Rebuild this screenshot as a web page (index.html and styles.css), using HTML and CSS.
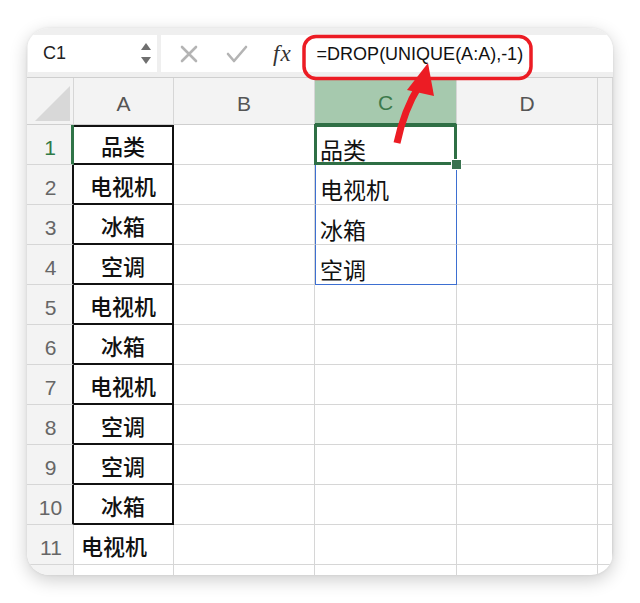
FILE: index.html
```html
<!DOCTYPE html>
<html lang="zh">
<head>
<meta charset="utf-8">
<title>DROP UNIQUE</title>
<link rel="stylesheet" href="styles.css">
</head>
<body>
<div class="page">
  <div class="card">
    <div class="fbar">
      <div class="namebox">
        <span class="ref">C1</span>
        <span class="spin">
          <svg width="12" height="24" viewBox="0 0 12 24"><path d="M6 1 L11 8 L1 8 Z" fill="#6f6f6f"/><path d="M1 15 L11 15 L6 22 Z" fill="#6f6f6f"/></svg>
        </span>
      </div>
      <div class="formula">
        <svg class="ico" width="22" height="22" viewBox="0 0 22 22"><path d="M4 4 L18 18 M18 4 L4 18" stroke="#b4b4b4" stroke-width="2.6" stroke-linecap="round"/></svg>
        <svg class="ico ok" width="24" height="22" viewBox="0 0 24 22"><path d="M3 11 L9 18 L21 4" fill="none" stroke="#b4b4b4" stroke-width="2.6" stroke-linecap="round" stroke-linejoin="round"/></svg>
        <span class="fx">fx</span>
        <span class="ftext">=DROP(UNIQUE(A:A),-1)</span>
      </div>
    </div>
    <div class="grid">
      <div class="ch corner"><svg width="40" height="40" viewBox="0 0 40 40"><path d="M3 38 L38 3 L38 38 Z" fill="#d8d8d8"/></svg></div>
      <div class="ch">A</div>
      <div class="ch">B</div>
      <div class="ch sel">C</div>
      <div class="ch">D</div>
      <div class="ch"></div>

      <div class="rh rsel">1</div>
      <div class="c a top">品类</div>
      <div class="c"></div>
      <div class="c v active">品类</div>
      <div class="c"></div>
      <div class="c"></div>

      <div class="rh rb">2</div>
      <div class="c a">电视机</div>
      <div class="c"></div>
      <div class="c v spill">电视机</div>
      <div class="c"></div>
      <div class="c"></div>

      <div class="rh rb">3</div>
      <div class="c a">冰箱</div>
      <div class="c"></div>
      <div class="c v spill">冰箱</div>
      <div class="c"></div>
      <div class="c"></div>

      <div class="rh rb">4</div>
      <div class="c a">空调</div>
      <div class="c"></div>
      <div class="c v spill last">空调</div>
      <div class="c"></div>
      <div class="c"></div>

      <div class="rh rb">5</div>
      <div class="c a">电视机</div>
      <div class="c"></div><div class="c"></div><div class="c"></div><div class="c"></div>

      <div class="rh rb">6</div>
      <div class="c a">冰箱</div>
      <div class="c"></div><div class="c"></div><div class="c"></div><div class="c"></div>

      <div class="rh rb">7</div>
      <div class="c a">电视机</div>
      <div class="c"></div><div class="c"></div><div class="c"></div><div class="c"></div>

      <div class="rh rb">8</div>
      <div class="c a">空调</div>
      <div class="c"></div><div class="c"></div><div class="c"></div><div class="c"></div>

      <div class="rh rb">9</div>
      <div class="c a">空调</div>
      <div class="c"></div><div class="c"></div><div class="c"></div><div class="c"></div>

      <div class="rh rb">10</div>
      <div class="c a">冰箱</div>
      <div class="c"></div><div class="c"></div><div class="c"></div><div class="c"></div>

      <div class="rh">11</div>
      <div class="c a11">电视机</div>
      <div class="c"></div><div class="c"></div><div class="c"></div><div class="c"></div>

      <div class="rh"></div>
      <div class="c"></div><div class="c"></div><div class="c"></div><div class="c"></div><div class="c"></div>
    </div>
  </div>
  <svg class="annot" width="640" height="603" viewBox="0 0 640 603">
    <rect x="304" y="36.5" width="227" height="42" rx="12" ry="12" fill="none" stroke="#ec1c24" stroke-width="3.5"/>
    <path d="M397 143 Q404 110 419 86" fill="none" stroke="#ec1c24" stroke-width="7"/>
    <path d="M428 63 L407 90 L434 96 Z" fill="#ec1c24"/>
  </svg>
</div>
</body>
</html>
```
FILE: styles.css
```css
html, body {
  margin: 0;
  padding: 0;
  background: #ffffff;
}
.page {
  position: relative;
  width: 640px;
  height: 603px;
  padding: 28px 27px 0 27px;
  box-sizing: border-box;
  font-family: "Liberation Sans", Arial, sans-serif;
}
.card {
  width: 586px;
  height: 547px;
  border-radius: 22px;
  overflow: hidden;
  background: #ffffff;
  box-shadow: 0 5px 18px rgba(0, 0, 0, 0.2), 0 0 3px rgba(0, 0, 0, 0.08);
  display: flex;
  flex-direction: column;
}
.fbar {
  flex: 0 0 50px;
  height: 50px;
  box-sizing: border-box;
  background: #efefef;
  border-bottom: 1px solid #cfcfcf;
  padding: 7px 0 5px 1px;
  display: flex;
  gap: 4px;
}
.namebox {
  width: 129px;
  background: #ffffff;
  display: flex;
  align-items: center;
  justify-content: space-between;
  padding: 0 5px 0 15px;
  box-sizing: border-box;
}
.ref {
  font-size: 18px;
  color: #222;
}
.spin {
  display: flex;
  align-items: center;
}
.formula {
  flex: 1;
  background: #ffffff;
  display: flex;
  align-items: center;
  padding-left: 17px;
}
.ico {
  display: block;
}
.ok {
  margin-left: 25px;
}
.fx {
  font-family: "Liberation Serif", "Times New Roman", serif;
  font-style: italic;
  font-size: 23px;
  color: #333;
  margin-left: 24px;
  letter-spacing: 1px;
}
.ftext {
  font-size: 18px;
  color: #111;
  margin-left: 25px;
  padding-top: 2px;
}
.grid {
  flex: 0 0 auto;
  display: grid;
  grid-template-columns: 47px 100px 141px 142px 141px 1fr;
  grid-template-rows: 47px repeat(12, 40px);
}
.ch {
  background: #f3f3f3;
  border-right: 1px solid #d6d6d6;
  border-bottom: 1px solid #cfcfcf;
  display: flex;
  align-items: center;
  justify-content: center;
  padding-top: 5px;
  box-sizing: border-box;
  font-size: 21px;
  color: #555;
}
.corner {
  padding: 0;
  align-items: flex-end;
  justify-content: flex-end;
}
.corner svg {
  display: block;
  margin: 0 1px 1px 0;
}
.ch.sel {
  background: #a6c9ae;
  color: #3c7a4c;
  border-bottom: 2px solid #2f6f45;
}
.rh {
  background: #f3f3f3;
  border-right: 1px solid #d6d6d6;
  border-bottom: 1px solid #d6d6d6;
  display: flex;
  align-items: center;
  justify-content: center;
  padding-top: 6px;
  padding-left: 2px;
  box-sizing: border-box;
  font-size: 21px;
  color: #666;
}
.rh.rb {
  border-right: 2px solid #111;
}
.rh.rsel {
  color: #2f7a47;
  border-right: 3px solid #2f7447;
}
.c {
  border-right: 1px solid #d6d6d6;
  border-bottom: 1px solid #d6d6d6;
  box-sizing: border-box;
  font-family: "Noto Sans CJK SC", "Liberation Sans", sans-serif;
  color: #111;
  display: flex;
  align-items: center;
  white-space: nowrap;
}
.c.a {
  justify-content: center;
  font-size: 22px;
  font-weight: 500;
  border-right: 2px solid #111;
  border-bottom: 2px solid #111;
  padding-top: 1px;
}
.c.a.top {
  box-shadow: inset 0 2px 0 #111;
}
.c.a11 {
  font-size: 22px;
  font-weight: 500;
  padding-left: 7px;
  padding-top: 1px;
}
.c.v {
  font-size: 23px;
  padding-left: 5px;
  padding-top: 9px;
}
.c.active {
  position: relative;
  box-shadow: inset 0 0 0 3px #2f6f45;
  border-right: none;
  border-bottom: none;
  margin: -1px 0 0 -1px;
  padding-left: 6px;
}
.c.active::after {
  content: "";
  position: absolute;
  right: -5px;
  bottom: -5px;
  width: 9px;
  height: 9px;
  background: #3a7350;
  border: 1px solid #ffffff;
  z-index: 2;
}
.c.spill {
  border-left: 1.5px solid #3d6fd1;
  border-right: 1.5px solid #3d6fd1;
  padding-left: 4px;
}
.c.spill.last {
  border-bottom: 1.5px solid #3d6fd1;
}
.annot {
  position: absolute;
  left: 0;
  top: 0;
  pointer-events: none;
}
```
